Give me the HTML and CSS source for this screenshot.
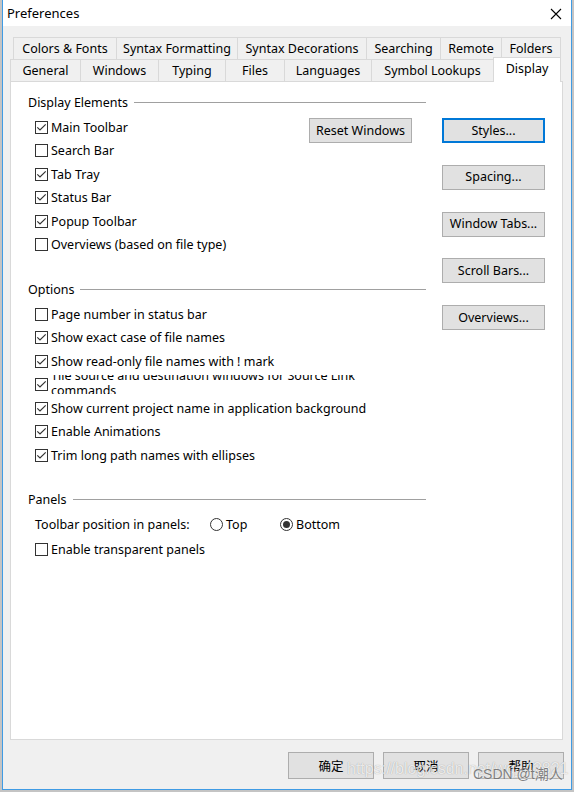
FILE: index.html
```html
<!DOCTYPE html>
<html>
<head>
<meta charset="utf-8">
<link rel="stylesheet" href="styles.css">
</head>
<body>
<div class="window">
  <div class="titlebar">
    <span class="title">Preferences</span>
    <svg class="close" width="12" height="12" viewBox="0 0 12 12"><path d="M1 1 L11 11 M11 1 L1 11" stroke="#000" stroke-width="1.1" fill="none"/></svg>
  </div>
  <div class="dialog">
    <div class="tabs">
      <div class="tabrow back">
        <div class="tab w-colors">Colors &amp; Fonts</div>
        <div class="tab w-synfmt">Syntax Formatting</div>
        <div class="tab w-syndec">Syntax Decorations</div>
        <div class="tab w-search">Searching</div>
        <div class="tab w-remote">Remote</div>
        <div class="tab w-folders">Folders</div>
      </div>
      <div class="tabrow front">
        <div class="tab w-general">General</div>
        <div class="tab w-windows">Windows</div>
        <div class="tab w-typing">Typing</div>
        <div class="tab w-files">Files</div>
        <div class="tab w-lang">Languages</div>
        <div class="tab w-symbol">Symbol Lookups</div>
        <div class="tab w-display active">Display</div>
      </div>
    </div>
    <div class="panel">
      <div class="leftcol">
        <section class="group">
          <div class="ghead"><span>Display Elements</span><i class="rule"></i></div>
          <div class="split">
            <div class="list">
              <div class="cb on"><span class="box"><svg viewBox="0 0 13 13"><path d="M2.3 6.3 L5 9 L10.7 3.3"/></svg></span><span class="lbl">Main Toolbar</span></div>
              <div class="cb"><span class="box"></span><span class="lbl">Search Bar</span></div>
              <div class="cb on"><span class="box"><svg viewBox="0 0 13 13"><path d="M2.3 6.3 L5 9 L10.7 3.3"/></svg></span><span class="lbl">Tab Tray</span></div>
              <div class="cb on"><span class="box"><svg viewBox="0 0 13 13"><path d="M2.3 6.3 L5 9 L10.7 3.3"/></svg></span><span class="lbl">Status Bar</span></div>
              <div class="cb on"><span class="box"><svg viewBox="0 0 13 13"><path d="M2.3 6.3 L5 9 L10.7 3.3"/></svg></span><span class="lbl">Popup Toolbar</span></div>
              <div class="cb"><span class="box"></span><span class="lbl">Overviews (based on file type)</span></div>
            </div>
            <div class="btn reset">Reset Windows</div>
          </div>
        </section>
        <section class="group g-options">
          <div class="ghead"><span>Options</span><i class="rule"></i></div>
          <div class="list">
            <div class="cb"><span class="box"></span><span class="lbl">Page number in status bar</span></div>
            <div class="cb on"><span class="box"><svg viewBox="0 0 13 13"><path d="M2.3 6.3 L5 9 L10.7 3.3"/></svg></span><span class="lbl">Show exact case of file names</span></div>
            <div class="cb on"><span class="box"><svg viewBox="0 0 13 13"><path d="M2.3 6.3 L5 9 L10.7 3.3"/></svg></span><span class="lbl">Show read-only file names with ! mark</span></div>
            <div class="cb on"><span class="box"><svg viewBox="0 0 13 13"><path d="M2.3 6.3 L5 9 L10.7 3.3"/></svg></span><span class="lbl clip"><span class="cliptext">Tile source and destination windows for Source Link commands</span></span></div>
            <div class="cb on"><span class="box"><svg viewBox="0 0 13 13"><path d="M2.3 6.3 L5 9 L10.7 3.3"/></svg></span><span class="lbl">Show current project name in application background</span></div>
            <div class="cb on"><span class="box"><svg viewBox="0 0 13 13"><path d="M2.3 6.3 L5 9 L10.7 3.3"/></svg></span><span class="lbl">Enable Animations</span></div>
            <div class="cb on"><span class="box"><svg viewBox="0 0 13 13"><path d="M2.3 6.3 L5 9 L10.7 3.3"/></svg></span><span class="lbl">Trim long path names with ellipses</span></div>
          </div>
        </section>
        <section class="group g-panels">
          <div class="ghead"><span>Panels</span><i class="rule"></i></div>
          <div class="list">
            <div class="radiorow">
              <span class="rlabel">Toolbar position in panels:</span>
              <span class="radio r-top"><span class="circle"></span><span class="lbl">Top</span></span>
              <span class="radio"><span class="circle sel"><span class="dot"></span></span><span class="lbl">Bottom</span></span>
            </div>
            <div class="cb cb-last"><span class="box"></span><span class="lbl">Enable transparent panels</span></div>
          </div>
        </section>
      </div>
      <div class="rightcol">
        <div class="btn side default">Styles...</div>
        <div class="btn side">Spacing...</div>
        <div class="btn side">Window Tabs...</div>
        <div class="btn side">Scroll Bars...</div>
        <div class="btn side">Overviews...</div>
      </div>
    </div>
    <div class="footer">
      <div class="btn foot">确定</div>
      <div class="btn foot">取消</div>
      <div class="btn foot">帮助</div>
      <div class="watermark"><span class="wm-url">https://blog.csdn.net/wq_42821</span><span class="wm-name">CSDN @t潮人</span></div>
    </div>
  </div>
</div>
</body>
</html>
```

FILE: styles.css
```css
* { box-sizing: border-box; }
html, body { margin: 0; padding: 0; }
body {
  width: 574px;
  height: 792px;
  overflow: hidden;
  background: #c4c4c4;
  font-family: "Noto Sans", "Noto Sans CJK SC", sans-serif;
  font-size: 12.5px;
  color: #000;
}
.window {
  margin-left: 2px;
  width: 570px;
  height: 790px;
  border: 1px solid #3f9be4;
  border-top: none;
  background: #f0f0f0;
  display: flex;
  flex-direction: column;
}
.titlebar {
  height: 26px;
  background: #fff;
  display: flex;
  align-items: center;
  justify-content: space-between;
  padding: 0 9px 0 4px;
  flex: none;
}
.title { font-size: 13px; }
.close { display: block; margin-top: 1px; }
.dialog {
  flex: 1;
  display: flex;
  flex-direction: column;
  padding: 11px 8px 0 7px;
}
.tabs { flex: none; }
.tabrow {
  display: flex;
  height: 22px;
  align-items: flex-end;
}
.tabrow.back { padding-left: 3px; }
.tab {
  flex: none;
  height: 22px;
  border: 1px solid #d9d9d9;
  border-bottom: none;
  margin-left: -1px;
  background: #f0f0f0;
  display: flex;
  align-items: center;
  justify-content: center;
  padding-bottom: 1px;
  white-space: nowrap;
}
.tab:first-child { margin-left: 0; }
.tab.active {
  height: 25px;
  margin-bottom: -1px;
  background: #fff;
  position: relative;
  z-index: 2;
  padding-bottom: 4px;
}
.w-colors { width: 104px; }
.w-synfmt { width: 122px; }
.w-syndec { width: 130px; }
.w-search { width: 75px; }
.w-remote { width: 62px; }
.w-folders { width: 60px; }
.w-general { width: 71px; }
.w-windows { width: 79px; }
.w-typing { width: 68px; }
.w-files { width: 60px; }
.w-lang { width: 88px; }
.w-symbol { width: 123px; }
.w-display { width: 68px; }

.panel {
  height: 659px;
  background: #fff;
  border: 1px solid #d9d9d9;
  display: flex;
  padding: 12px 0 0 17px;
  flex: none;
}
.leftcol { width: 398px; flex: none; }
.rightcol {
  margin-left: 16px;
  padding-top: 24px;
  display: flex;
  flex-direction: column;
  gap: 21.75px;
}
.ghead {
  height: 16px;
  display: flex;
  align-items: center;
  margin-bottom: 5.5px;
}
.rule {
  flex: 1;
  height: 1px;
  background: #a0a0a0;
  margin-left: 6px;
}
.g-options { margin-top: 24.5px; }
.g-panels { margin-top: 24px; }
.split { display: flex; justify-content: space-between; align-items: flex-start; }
.list { padding-left: 7px; }
.cb {
  height: 23.5px;
  display: flex;
  align-items: center;
}
.cb-last { margin-top: 1.5px; }
.box {
  width: 13px;
  height: 13px;
  border: 1px solid #333;
  background: #fff;
  flex: none;
  margin-right: 3px;
  position: relative;
}
.box svg {
  position: absolute;
  left: -1px;
  top: -1px;
  width: 13px;
  height: 13px;
  fill: none;
  stroke: #333;
  stroke-width: 1.2;
}
.lbl { white-space: nowrap; }
.lbl.clip {
  height: 19px;
  width: 320px;
  overflow: hidden;
  display: flex;
  align-items: center;
  margin-bottom: 1.5px;
  white-space: normal;
}
.cliptext { line-height: 15px; display: block; flex: none; width: 320px; margin-bottom: 2px; }
.btn {
  background: #e1e1e1;
  border: 1px solid #adadad;
  display: flex;
  align-items: center;
  justify-content: center;
  white-space: nowrap;
  padding-bottom: 1px;
}
.reset {
  width: 103px;
  height: 25px;
  margin-top: 2.5px;
  margin-right: 14px;
}
.side { width: 103px; height: 25px; }
.side.default { border: 2px solid #0078d7; }
.radiorow {
  height: 23.5px;
  display: flex;
  align-items: center;
}
.rlabel { width: 175px; flex: none; }
.radio { display: flex; align-items: center; }
.r-top { width: 70px; }
.circle {
  width: 13px;
  height: 13px;
  border: 1px solid #333;
  border-radius: 50%;
  background: #fff;
  margin-right: 3px;
  display: flex;
  align-items: center;
  justify-content: center;
}
.dot { width: 7px; height: 7px; border-radius: 50%; background: #333; }
.footer {
  flex: 1;
  display: flex;
  justify-content: flex-end;
  align-items: flex-start;
  gap: 9px;
  padding-top: 12px;
  margin-right: -1px;
  position: relative;
}
.foot { width: 86px; height: 27px; font-family: "Noto Sans CJK SC", sans-serif; font-size: 12.5px; }
.watermark {
  position: absolute;
  left: 337px;
  top: 20px;
  width: 224px;
  height: 24px;
  overflow: hidden;
  white-space: nowrap;
}
.wm-url {
  position: absolute;
  left: 0;
  top: 0;
  font-family: "Liberation Sans", sans-serif;
  font-size: 16px;
  color: rgba(255,255,255,0.8);
  text-shadow: 0 0 1px rgba(0,0,0,0.35);
}
.wm-name {
  position: absolute;
  left: 126px;
  top: 3px;
  font-family: "Liberation Sans", "Noto Sans CJK SC", sans-serif;
  font-size: 14px;
  color: rgba(90,90,90,0.75);
  text-shadow: 0 0 2px rgba(255,255,255,0.9);
}
```
